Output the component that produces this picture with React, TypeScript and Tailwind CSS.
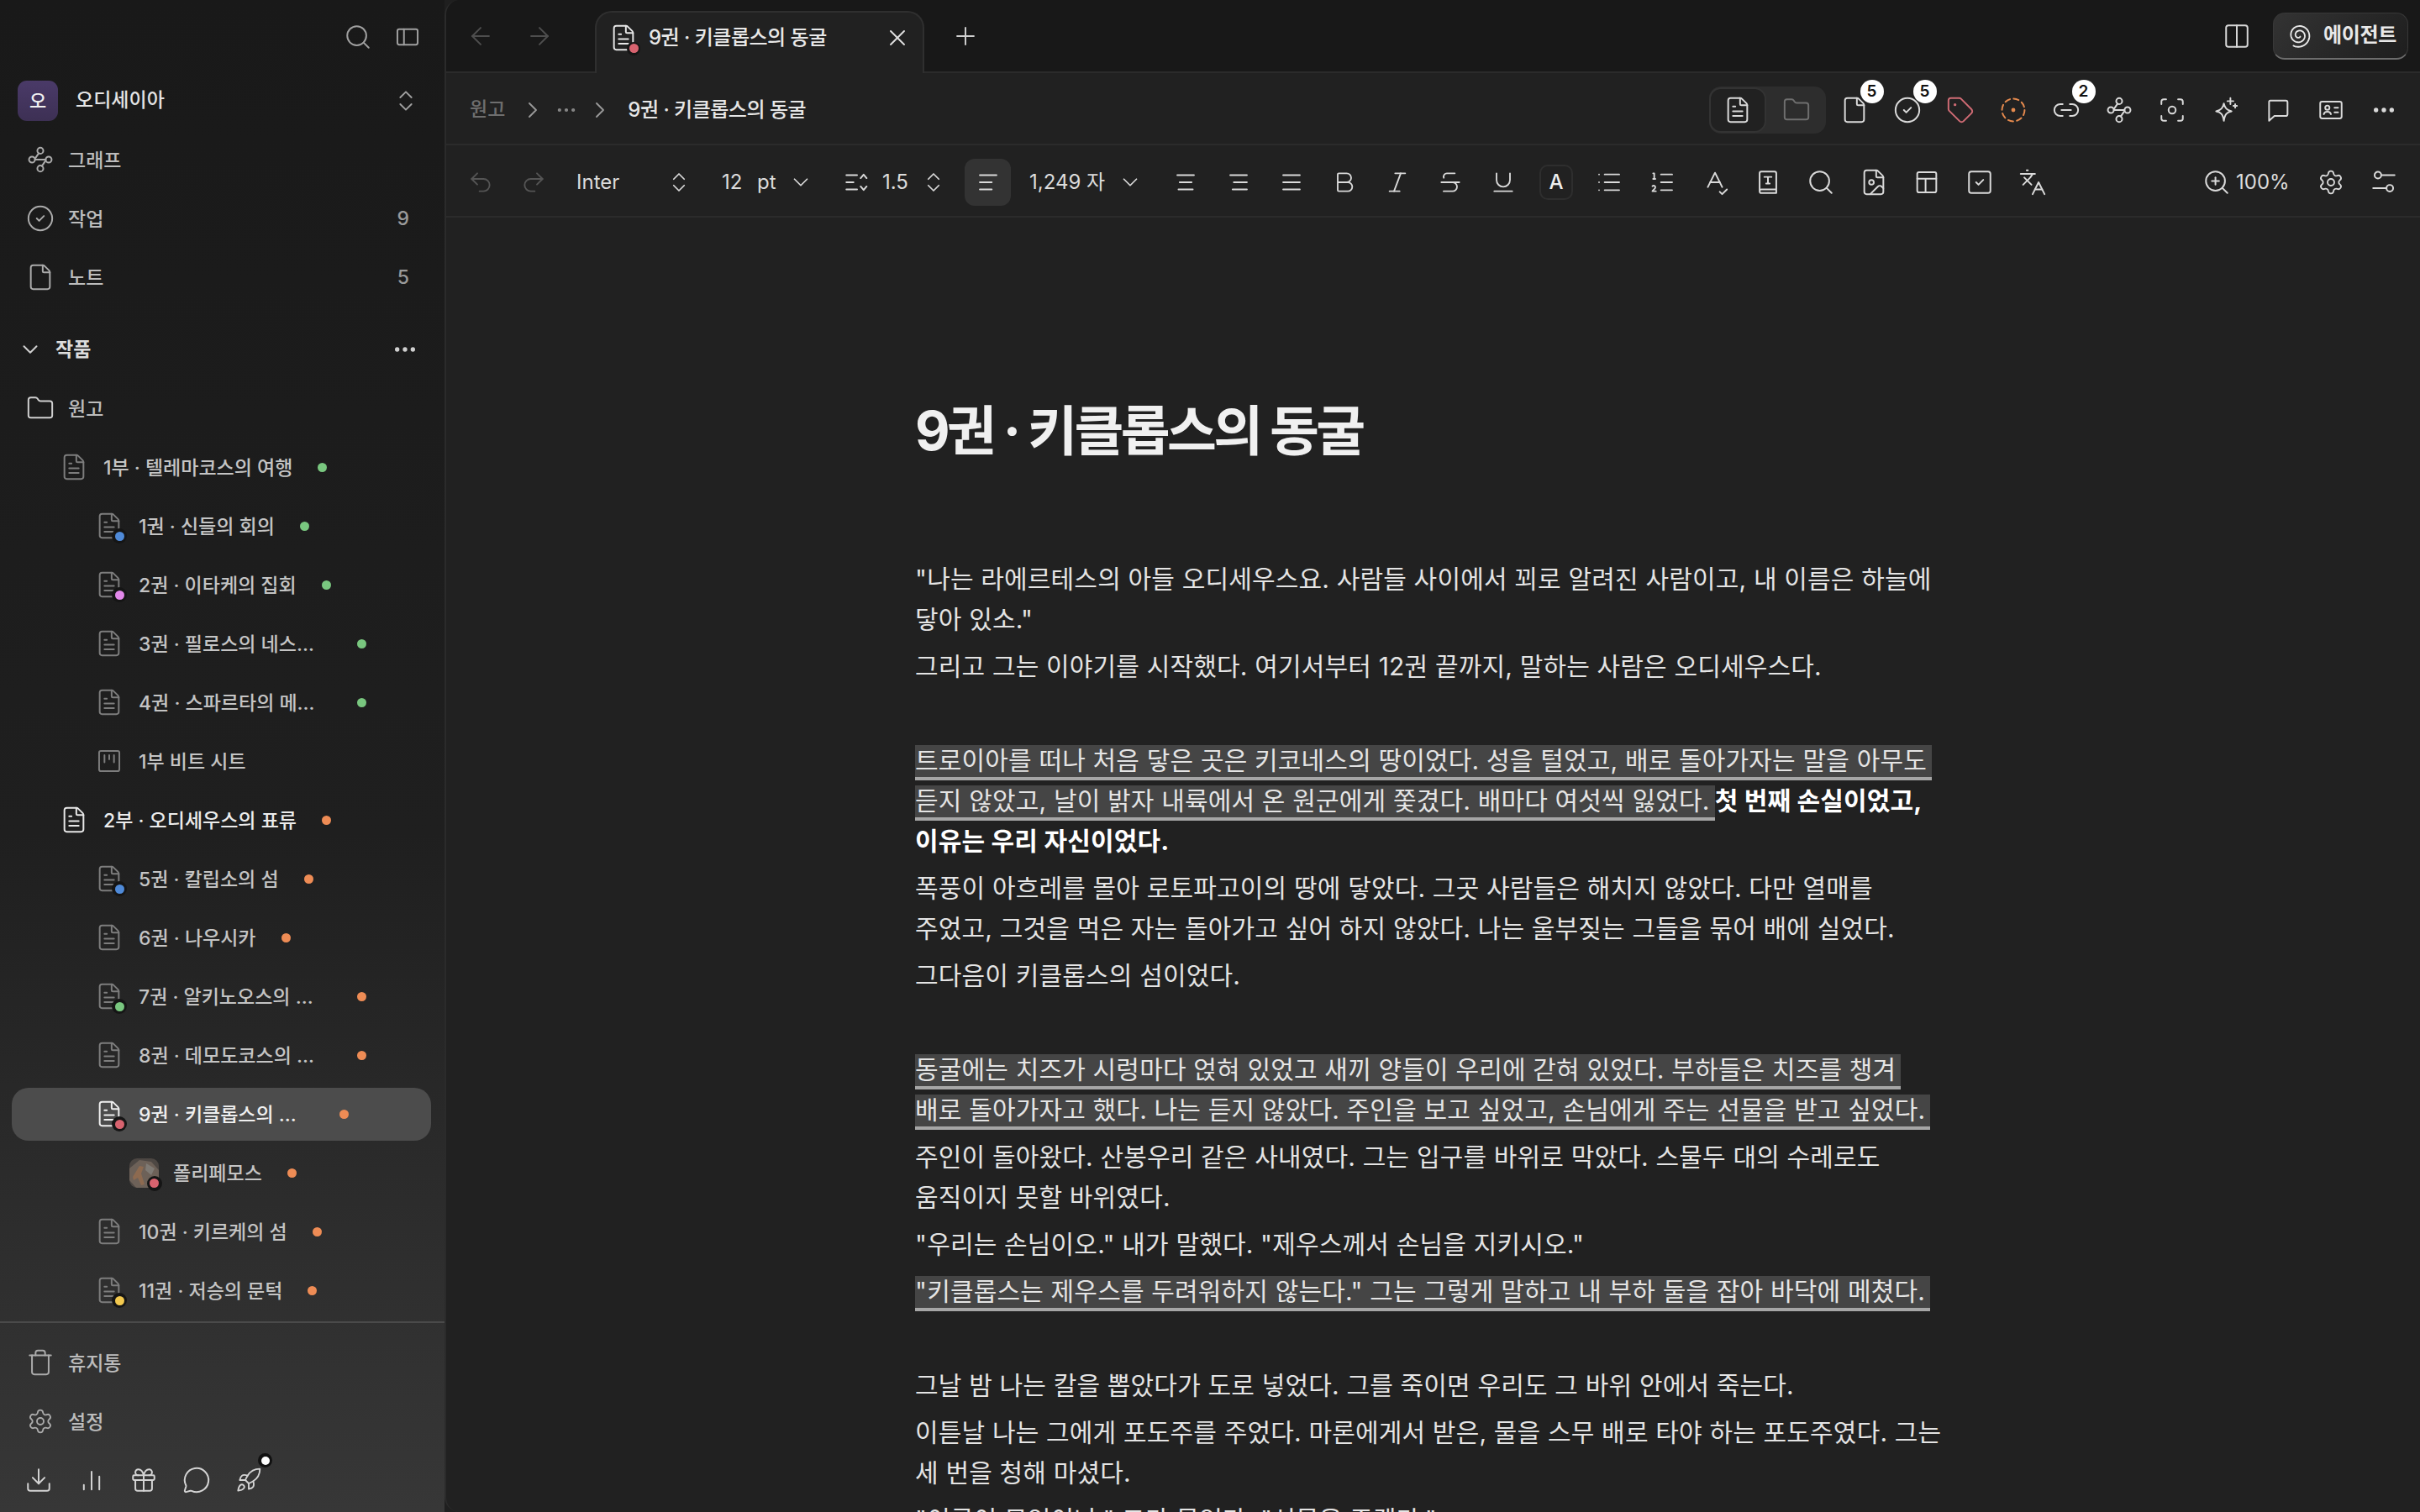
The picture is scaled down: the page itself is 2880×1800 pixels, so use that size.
import React from "react";
import {
  Search, ChevronsUpDown, CircleCheck, File, Folder, FileText, Trash, Settings, Download, Gift, MessageCircle, Rocket,
  ArrowLeft, ArrowRight, X, Plus, ChevronRight, ChevronDown, Ellipsis, Undo2, Redo2, Bold, Italic, Strikethrough, Underline,
  List, ListOrdered, SpellCheck, FileImage, SquareCheck, Languages, ZoomIn, Tag, Link2, Focus, Columns2,
} from "lucide-react";

const sw = 1.4;

function Svg({ children, size = 34, className = "" }: { children: React.ReactNode; size?: number; className?: string }) {
  return (
    <svg width={size} height={size} viewBox="0 0 24 24" fill="none" stroke="currentColor" strokeWidth={sw} strokeLinecap="round" strokeLinejoin="round" className={className}>
      {children}
    </svg>
  );
}
const PanelIcon = () => <Svg><rect x="3.5" y="5.5" width="17" height="13" rx="1.5" /><path d="M9 5.5v13" /></Svg>;
const GraphIcon = ({ size = 34 }: { size?: number }) => (
  <Svg size={size}>
    <circle cx="12" cy="4.5" r="2.5" /><circle cx="5" cy="12" r="2.5" /><circle cx="19" cy="12" r="2.5" /><circle cx="12" cy="19.5" r="2.5" />
    <path d="M7.5 12h9M10.7 6.6 8 10.5M16 13.5l-2.7 3.9" />
  </Svg>
);
const BeatIcon = () => <Svg className="text-[#7d7d7d]"><rect x="3.5" y="3.5" width="17" height="17" rx="1.5" /><path d="M8 7v6M12 7v3.5M16 7v6" /></Svg>;
const BarsIcon = () => <Svg><path d="M5.5 20v-4M12 20V5M18.5 20V9" /></Svg>;
const spiralPath = (() => {
  const pts: string[] = [];
  const turns = 2.2;
  const steps = 120;
  for (let i = 0; i <= steps; i++) {
    const t = i / steps;
    const th = 0.8 + t * turns * 2 * Math.PI;
    const r = 1.6 + t * 9;
    pts.push(`${(12 + r * Math.cos(th)).toFixed(2)} ${(12 + r * Math.sin(th)).toFixed(2)}`);
  }
  return "M" + pts.join("L");
})();
const Spiral = () => <Svg size={32}><path d={spiralPath} /></Svg>;
const DashedDot = () => (
  <Svg><circle cx="12" cy="12" r="9.5" strokeDasharray="4.4 3.05" /><circle cx="12" cy="12" r="1" fill="currentColor" /></Svg>
);
const Sparkle = () => (
  <Svg>
    <path d="M11 6.5c.8 4 2.5 5.7 6.5 6.500-4 .8-5.700 2.500-6.500 8-.8-5.500-2.500-7.200-6.500-8 4-.8 5.700-2.500 6.500-6.500Z" />
    <path d="M16.500 2v5M14 4.500h5M20.500 7v3M19 8.500h3" />
  </Svg>
);
const Comment = () => <Svg><path d="M5.500 4h13a1.500 1.500 0 0 1 1.500 1.500v10a1.500 1.500 0 0 1-1.500 1.500H9l-4.500 4V5a1 1 0 0 1 1-1Z" /></Svg>;
const IdIcon = () => (
  <Svg><rect x="3" y="5" width="18" height="14" rx="1.500" /><circle cx="9" cy="10" r="1.800" /><path d="M6 15.500c.5-2.800 5.500-2.800 6 0M15 10h3M15 14h3" /></Svg>
);
const AlignIcon = ({ a, b, c }: { a: string; b: string; c: string }) => <Svg><path d={`${a} ${b} ${c}`} /></Svg>;
const LineHeightIcon = () => <Svg><path d="M3 6h9M3 12h6M3 18h9M15 8.500l2.500-3 2.500 3M15 15.500l2.500 3 2.500-3" /></Svg>;
const BookT = () => <Svg><path d="M5 19V4.500A1.500 1.500 0 0 1 6.500 3h11A1.500 1.500 0 0 1 19 4.500V21H6.500A1.500 1.500 0 0 1 5 19.500a1.500 1.500 0 0 1 1.500-1.500H19" /><path d="M9 7.500h6M12 7.500V13M10.500 13h3" /></Svg>;
const TableIcon = () => <Svg><rect x="4" y="3.500" width="16" height="17" rx="1.500" /><path d="M4 9h16M11 9v11.500" /></Svg>;
const SlidersIcon = () => <Svg><circle cx="7" cy="6" r="2.800" /><path d="M10 6h11M3 17h11" /><circle cx="17" cy="17" r="2.800" /></Svg>;

function Slot({ children, w = "w-[63px]", className = "" }: { children: React.ReactNode; w?: string; className?: string }) {
  return <div className={`${w} h-[40px] shrink-0 flex items-center justify-center relative ${className}`}>{children}</div>;
}
function Count({ n }: { n: number }) {
  return (
    <span className="absolute left-1/2 top-1/2 ml-[7px] -mt-[36px] w-[28px] h-[28px] rounded-full bg-white text-[#111] text-[19px] font-semibold leading-[28px] text-center">
      {n}
    </span>
  );
}

type RowProps = {
  pad: string;
  icon: React.ReactNode;
  label: string;
  dot?: string;
  badge?: string;
  max?: string;
  tone?: string;
  selected?: boolean;
};
function StatusBadge({ color }: { color: string }) {
  return (
    <span className="absolute right-[-4px] bottom-[-4px] w-[18px] h-[18px] rounded-full bg-[#151515] flex items-center justify-center">
      <span className={`w-[11px] h-[11px] rounded-full ${color}`} />
    </span>
  );
}
function Row({ pad, icon, label, dot, badge, max = "", tone = "text-[#c4c4c4]", selected = false }: RowProps) {
  return (
    <div className="h-[70px] px-[16px] pl-[14px] py-[3.5px] shrink-0">
      <div className={`h-[63px] flex items-center rounded-[20px] ${pad} ${selected ? "bg-[#4c4c4c]" : ""}`}>
        <div className="w-[34px] h-[34px] shrink-0 relative flex items-center justify-center">
          {icon}
          {badge && <StatusBadge color={badge} />}
        </div>
        <span className={`ml-[18px] pt-[2px] text-[23px] font-medium leading-[34px] truncate ${max} ${tone}`}>{label}</span>
        {dot && <span className={`ml-[30px] w-[11px] h-[11px] rounded-full shrink-0 ${dot}`} />}
      </div>
    </div>
  );
}
const dim = "text-[#7d7d7d]";
const D = ({ c = dim }: { c?: string }) => <FileText size={34} strokeWidth={sw} className={c} />;
const green = "bg-[#79c77f]";
const orange = "bg-[#ee8c55]";

function Thumb() {
  return (
    <div className="w-[35px] h-[35px] relative shrink-0">
      <svg width="35" height="35" viewBox="0 0 35 35" className="rounded-[9px]">
        <rect width="35" height="35" fill="#4d4743" />
        <path d="M0 12 12 2l14 2 9 10v10l-11 11H8L0 26Z" fill="#6d6158" />
        <path d="M4 22 12 9l5 1-3 8 4 13-4 1-4-9-5 3Z" fill="#8d6a50" />
        <path d="M20 6l10 6-4 8-7-6Z" fill="#7f7a74" />
      </svg>
      <StatusBadge color="bg-[#d8636f]" />
    </div>
  );
}

function NavRow({ icon, label, count }: { icon: React.ReactNode; label: string; count?: string }) {
  return (
    <div className="h-[70px] shrink-0 flex items-center pl-[31px] pr-[42px] text-[#ababab]">
      <div className="w-[34px] flex justify-center">{icon}</div>
      <span className="ml-[16px] pt-[2px] text-[23px] font-medium text-[#bcbcbc]">{label}</span>
      {count && <span className="ml-auto text-[23px] font-medium text-[#9a9a9a]">{count}</span>}
    </div>
  );
}

function Sidebar() {
  return (
    <aside className="w-[529px] shrink-0 h-full flex flex-col bg-[linear-gradient(180deg,#191919_0%,#1f1f1f_55%,#373737_100%)]">
      <div className="h-[87px] shrink-0 flex items-center justify-end pr-[27px] gap-[25px] text-[#a0a0a0]">
        <Search size={34} strokeWidth={sw} />
        <PanelIcon />
      </div>
      <div className="h-[66px] shrink-0 flex items-center pl-[21px] pr-[30px]">
        <div className="w-[48px] h-[48px] rounded-[11px] bg-[linear-gradient(180deg,#4a3a68,#3d3054)] flex items-center justify-center text-[22px] font-medium text-[#f0f0f0]">오</div>
        <span className="ml-[21px] mb-[2px] text-[23px] font-medium text-[#e4e4e4]">오디세이아</span>
        <ChevronsUpDown size={32} strokeWidth={sw} className="ml-auto text-[#a0a0a0]" />
      </div>
      <div className="mt-[2px]">
        <NavRow icon={<GraphIcon />} label="그래프" />
        <NavRow icon={<CircleCheck size={34} strokeWidth={sw} />} label="작업" count="9" />
        <NavRow icon={<File size={34} strokeWidth={sw} />} label="노트" count="5" />
      </div>
      <div className="mt-[16px] h-[70px] shrink-0 flex items-center pl-[21px] pr-[31px]">
        <ChevronDown size={30} strokeWidth={1.6} className="text-[#cfcfcf]" />
        <span className="ml-[15px] text-[23px] font-bold text-[#dcdcdc]">작품</span>
        <Ellipsis size={32} strokeWidth={2} className="ml-auto text-[#d0d0d0]" />
      </div>
      <NavRow icon={<Folder size={34} strokeWidth={sw} className="text-[#d0d0d0]" />} label="원고" />
      <Row pad="pl-[57px]" icon={<D />} label="1부 · 텔레마코스의 여행" dot={green} />
      <Row pad="pl-[99px]" icon={<D />} badge="bg-[#4f8ad8]" label="1권 · 신들의 회의" dot={green} />
      <Row pad="pl-[99px]" icon={<D />} badge="bg-[#e288ea]" label="2권 · 이타케의 집회" dot={green} />
      <Row pad="pl-[99px]" icon={<D />} label="3권 · 필로스의 네스토르" max="max-w-[230px]" dot={green} />
      <Row pad="pl-[99px]" icon={<D />} label="4권 · 스파르타의 메넬라오스" max="max-w-[230px]" dot={green} />
      <Row pad="pl-[99px]" icon={<BeatIcon />} label="1부 비트 시트" />
      <Row pad="pl-[57px]" icon={<D c="text-[#e8e8e8]" />} label="2부 · 오디세우스의 표류" tone="text-[#ececec]" dot={orange} />
      <Row pad="pl-[99px]" icon={<D />} badge="bg-[#4f8ad8]" label="5권 · 칼립소의 섬" dot={orange} />
      <Row pad="pl-[99px]" icon={<D />} label="6권 · 나우시카" dot={orange} />
      <Row pad="pl-[99px]" icon={<D />} badge={green} label="7권 · 알키노오스의 궁전에서" max="w-[218px] mr-[12px]" dot={orange} />
      <Row pad="pl-[99px]" icon={<D />} label="8권 · 데모도코스의 노래" max="max-w-[230px]" dot={orange} />
      <Row pad="pl-[99px]" selected icon={<D c="text-[#efefef]" />} badge="bg-[#d8636f]" label="9권 · 키클롭스의 동굴" max="w-[196px] mr-[13px]" tone="text-[#efefef]" dot={orange} />
      <Row pad="pl-[140px]" icon={<Thumb />} label="폴리페모스" dot={orange} />
      <Row pad="pl-[99px]" icon={<D />} label="10권 · 키르케의 섬" dot={orange} />
      <Row pad="pl-[99px]" icon={<D />} badge="bg-[#f3c94f]" label="11권 · 저승의 문턱" dot={orange} />
      <div className="mt-[2px] h-[2px] shrink-0 bg-[#4a4a4a]" />
      <div className="mt-[12px]">
        <NavRow icon={<Trash size={34} strokeWidth={sw} />} label="휴지통" />
        <NavRow icon={<Settings size={32} strokeWidth={sw} />} label="설정" />
      </div>
      <div className="h-[70px] shrink-0 pl-[15px] flex items-center text-[#d4d4d4]">
        <Slot w="w-[62.5px]"><Download size={34} strokeWidth={sw} /></Slot>
        <Slot w="w-[62.5px]"><BarsIcon /></Slot>
        <Slot w="w-[62.5px]"><Gift size={34} strokeWidth={sw} /></Slot>
        <Slot w="w-[62.5px]"><MessageCircle size={34} strokeWidth={sw} /></Slot>
        <Slot w="w-[62.5px]">
          <Rocket size={32} strokeWidth={sw} />
          <span className="absolute left-[42px] top-[-12px] w-[17px] h-[17px] rounded-full bg-[#111] flex items-center justify-center">
            <span className="w-[10px] h-[10px] rounded-full bg-white" />
          </span>
        </Slot>
      </div>
    </aside>
  );
}

function TabBar() {
  return (
    <div className="h-[87px] shrink-0 bg-[#181818] border-b-2 border-[#2b2b2b] flex items-end pl-[20px] pr-[14px]">
      <div className="self-center w-[42px] flex justify-center text-[#4e4e4e]"><ArrowLeft size={34} strokeWidth={sw} /></div>
      <div className="self-center ml-[28px] w-[42px] flex justify-center text-[#4e4e4e]"><ArrowRight size={34} strokeWidth={sw} /></div>
      <div className="ml-[45px] w-[392px] h-[74px] -mb-[2px] pb-[13px] bg-[#212121] border-2 border-b-0 border-[#2f2f2f] rounded-t-[20px] flex items-center pl-[15px] pr-[14px]">
        <div className="w-[34px] h-[34px] relative flex items-center justify-center text-[#e6e6e6]">
          <FileText size={34} strokeWidth={sw} />
          <span className="absolute right-[-3px] bottom-[-4px] w-[16px] h-[16px] rounded-full bg-[#151515] flex items-center justify-center">
            <span className="w-[11px] h-[11px] rounded-full bg-[#d8636f]" />
          </span>
        </div>
        <span className="ml-[13px] text-[24px] font-medium text-[#e8e8e8] tracking-[-0.5px]">9권 · 키클롭스의 동굴</span>
        <X size={32} strokeWidth={sw} className="ml-auto text-[#e0e0e0]" />
      </div>
      <div className="self-center ml-[32px] w-[34px] flex justify-center text-[#cfcfcf]"><Plus size={34} strokeWidth={sw} /></div>
      <div className="self-center ml-auto w-[34px] flex justify-center text-[#d8d8d8]"><Columns2 size={34} strokeWidth={sw} /></div>
      <div className="self-center ml-[26px] w-[161px] h-[56px] rounded-[14px] border border-[#383838] border-b-2 border-b-[#6d6d6d] bg-[linear-gradient(135deg,#333333,#1e1e1e)] flex items-center pl-[14px] text-[#e8e8e8]">
        <Spiral />
        <span className="ml-[13px] text-[24px] font-bold tracking-[-0.3px]">에이전트</span>
      </div>
    </div>
  );
}

function CrumbBar() {
  return (
    <div className="h-[86px] shrink-0 pt-[3px] border-b-2 border-[#2b2b2b] flex items-center pl-[28px] pr-[12px]">
      <span className="text-[23px] font-medium text-[#6e6e6e]">원고</span>
      <ChevronRight size={32} strokeWidth={sw} className="ml-[17px] text-[#9a9a9a]" />
      <Ellipsis size={28} strokeWidth={1.6} className="ml-[10px] text-[#8a8a8a]" />
      <ChevronRight size={32} strokeWidth={sw} className="ml-[10px] text-[#9a9a9a]" />
      <span className="ml-[17px] text-[24px] font-medium text-[#e6e6e6] tracking-[-0.5px]">9권 · 키클롭스의 동굴</span>
      <div className="ml-auto flex items-center text-[#dadada]">
        <div className="w-[139px] h-[56px] rounded-[14px] bg-[#2d2d2d] flex items-center">
          <div className="w-[68px] h-[54px] rounded-[14px] bg-[#212121] border-2 border-[#333333] flex items-center justify-center"><FileText size={34} strokeWidth={sw} /></div>
          <div className="flex-1 flex justify-center text-[#6f6f6f]"><Folder size={34} strokeWidth={sw} /></div>
        </div>
        <Slot className="ml-[2px]"><File size={34} strokeWidth={sw} /><Count n={5} /></Slot>
        <Slot><CircleCheck size={34} strokeWidth={sw} /><Count n={5} /></Slot>
        <Slot className="text-[#cf6b74]"><Tag size={34} strokeWidth={sw} /></Slot>
        <Slot className="text-[#e58a4e]"><DashedDot /></Slot>
        <Slot><Link2 size={34} strokeWidth={sw} /><Count n={2} /></Slot>
        <Slot><GraphIcon /></Slot>
        <Slot><Focus size={34} strokeWidth={sw} /></Slot>
        <Slot><Sparkle /></Slot>
        <Slot><Comment /></Slot>
        <Slot><IdIcon /></Slot>
        <Slot><Ellipsis size={32} strokeWidth={2} /></Slot>
      </div>
    </div>
  );
}

function ToolBar() {
  const t = "text-[24px] text-[#dcdcdc] leading-[34px] whitespace-nowrap";
  return (
    <div className="h-[86px] shrink-0 pt-[3px] border-b-2 border-[#2b2b2b] flex items-center pl-[20px] pr-[12px] text-[#dadada]">
      <Slot w="w-[42px]" className="text-[#555555]"><Undo2 size={32} strokeWidth={sw} /></Slot>
      <Slot w="w-[42px]" className="ml-[21px] text-[#555555]"><Redo2 size={32} strokeWidth={sw} /></Slot>
      <span className={`ml-[30px] w-[105px] ${t}`}>Inter</span>
      <Slot w="w-[34px]"><ChevronsUpDown size={30} strokeWidth={sw} /></Slot>
      <span className={`ml-[34px] w-[42px] ${t}`}>12</span>
      <span className={`w-[35px] ${t}`}>pt</span>
      <Slot w="w-[34px]"><ChevronDown size={30} strokeWidth={sw} /></Slot>
      <Slot w="w-[34px]" className="ml-[33px]"><LineHeightIcon /></Slot>
      <span className={`ml-[13px] w-[44px] ${t}`}>1.5</span>
      <Slot w="w-[34px]"><ChevronsUpDown size={30} strokeWidth={sw} /></Slot>
      <div className="ml-[20px] w-[55px] h-[56px] rounded-[12px] bg-[#333333] flex items-center justify-center"><AlignIcon a="M5 6h14" b="M5 12h10" c="M5 18h10" /></div>
      <span className={`ml-[22px] w-[103px] ${t}`}>1,249 자</span>
      <Slot w="w-[34px]"><ChevronDown size={30} strokeWidth={sw} /></Slot>
      <Slot className="ml-[17.5px]"><AlignIcon a="M5 6h14" b="M7 12h10" c="M6 18h12" /></Slot>
      <Slot><AlignIcon a="M5 6h14" b="M8 12h11" c="M7 18h12" /></Slot>
      <Slot><AlignIcon a="M5 6h14" b="M5 12h14" c="M5 18h14" /></Slot>
      <Slot><Bold size={32} strokeWidth={sw} /></Slot>
      <Slot><Italic size={32} strokeWidth={sw} /></Slot>
      <Slot><Strikethrough size={32} strokeWidth={sw} /></Slot>
      <Slot><Underline size={32} strokeWidth={sw} /></Slot>
      <Slot>
        <div className="w-[40px] h-[42px] rounded-[10px] border-2 border-[#2e2e2e] flex items-center justify-center text-[24px] font-medium text-[#eeeeee]">A</div>
      </Slot>
      <Slot><List size={32} strokeWidth={sw} /></Slot>
      <Slot><ListOrdered size={32} strokeWidth={sw} /></Slot>
      <Slot><SpellCheck size={34} strokeWidth={sw} /></Slot>
      <Slot><BookT /></Slot>
      <Slot><Search size={34} strokeWidth={sw} /></Slot>
      <Slot><FileImage size={34} strokeWidth={sw} /></Slot>
      <Slot><TableIcon /></Slot>
      <Slot><SquareCheck size={34} strokeWidth={sw} /></Slot>
      <Slot><Languages size={34} strokeWidth={sw} /></Slot>
      <div className="ml-auto flex items-center">
        <ZoomIn size={34} strokeWidth={sw} />
        <span className={`ml-[6px] w-[63px] ${t}`}>100%</span>
        <Slot className="ml-[18px]"><Settings size={32} strokeWidth={sw} /></Slot>
        <Slot><SlidersIcon /></Slot>
      </div>
    </div>
  );
}

const Ln = ({ children }: { children: React.ReactNode }) => <span className="block h-[48px] leading-[48px] whitespace-nowrap">{children}</span>;
const Hi = ({ children }: { children: React.ReactNode }) => (
  <span className="block w-fit h-[42px] leading-[36px] pr-[6px] bg-[#454545] border-b-4 border-[#a6a6a6] whitespace-nowrap">{children}</span>
);
const HiLn = ({ children }: { children: React.ReactNode }) => <span className="block h-[48px] pt-[6px]"><Hi>{children}</Hi></span>;
const P = ({ children, gap = false }: { children: React.ReactNode; gap?: boolean }) => (
  <p className={`mb-[8px] ${gap ? "mt-[64px]" : ""}`}>{children}</p>
);

function Editor() {
  return (
    <div className="flex-1 overflow-hidden pl-[558px] pt-[214px] text-[30px] text-[#e4e4e4] tracking-[0.17px]">
      <h1 className="h-[80px] leading-[80px] text-[64px] font-bold text-[#f0f0f0] tracking-[-3.6px] mb-[112px]">9권 · 키클롭스의 동굴</h1>
      <P><Ln>"나는 라에르테스의 아들 오디세우스요. 사람들 사이에서 꾀로 알려진 사람이고, 내 이름은 하늘에</Ln><Ln>닿아 있소."</Ln></P>
      <P><Ln>그리고 그는 이야기를 시작했다. 여기서부터 12권 끝까지, 말하는 사람은 오디세우스다.</Ln></P>
      <P gap>
        <HiLn>트로이아를 떠나 처음 닿은 곳은 키코네스의 땅이었다. 성을 털었고, 배로 돌아가자는 말을 아무도</HiLn>
        <span className="flex h-[48px] pt-[6px]"><Hi>듣지 않았고, 날이 밝자 내륙에서 온 원군에게 쫓겼다. 배마다 여섯씩 잃었다.</Hi><b className="-mt-[6px] leading-[48px] font-bold text-white whitespace-nowrap">첫 번째 손실이었고,</b></span>
        <Ln><b className="font-bold text-white">이유는 우리 자신이었다.</b></Ln>
      </P>
      <P><Ln>폭풍이 아흐레를 몰아 로토파고이의 땅에 닿았다. 그곳 사람들은 해치지 않았다. 다만 열매를</Ln><Ln>주었고, 그것을 먹은 자는 돌아가고 싶어 하지 않았다. 나는 울부짖는 그들을 묶어 배에 실었다.</Ln></P>
      <P><Ln>그다음이 키클롭스의 섬이었다.</Ln></P>
      <P gap>
        <HiLn>동굴에는 치즈가 시렁마다 얹혀 있었고 새끼 양들이 우리에 갇혀 있었다. 부하들은 치즈를 챙겨</HiLn>
        <HiLn>배로 돌아가자고 했다. 나는 듣지 않았다. 주인을 보고 싶었고, 손님에게 주는 선물을 받고 싶었다.</HiLn>
      </P>
      <P><Ln>주인이 돌아왔다. 산봉우리 같은 사내였다. 그는 입구를 바위로 막았다. 스물두 대의 수레로도</Ln><Ln>움직이지 못할 바위였다.</Ln></P>
      <P><Ln>"우리는 손님이오." 내가 말했다. "제우스께서 손님을 지키시오."</Ln></P>
      <P><HiLn>"키클롭스는 제우스를 두려워하지 않는다." 그는 그렇게 말하고 내 부하 둘을 잡아 바닥에 메쳤다.</HiLn></P>
      <P gap><Ln>그날 밤 나는 칼을 뽑았다가 도로 넣었다. 그를 죽이면 우리도 그 바위 안에서 죽는다.</Ln></P>
      <P><Ln>이튿날 나는 그에게 포도주를 주었다. 마론에게서 받은, 물을 스무 배로 타야 하는 포도주였다. 그는</Ln><Ln>세 번을 청해 마셨다.</Ln></P>
      <P><Ln>"이름이 무엇이냐." 그가 물었다. "선물을 주겠다."</Ln></P>
    </div>
  );
}

export default function App() {
  return (
    <div className="w-[2880px] h-[1800px] flex overflow-hidden bg-[#1f1f1f] font-['Inter','Noto_Sans_CJK_KR',sans-serif]">
      <Sidebar />
      <main className="flex-1 min-w-0 h-full flex flex-col bg-[#212121] border-l-2 border-[#2b2b2b] rounded-l-[18px] overflow-hidden">
        <TabBar />
        <CrumbBar />
        <ToolBar />
        <Editor />
      </main>
    </div>
  );
}
